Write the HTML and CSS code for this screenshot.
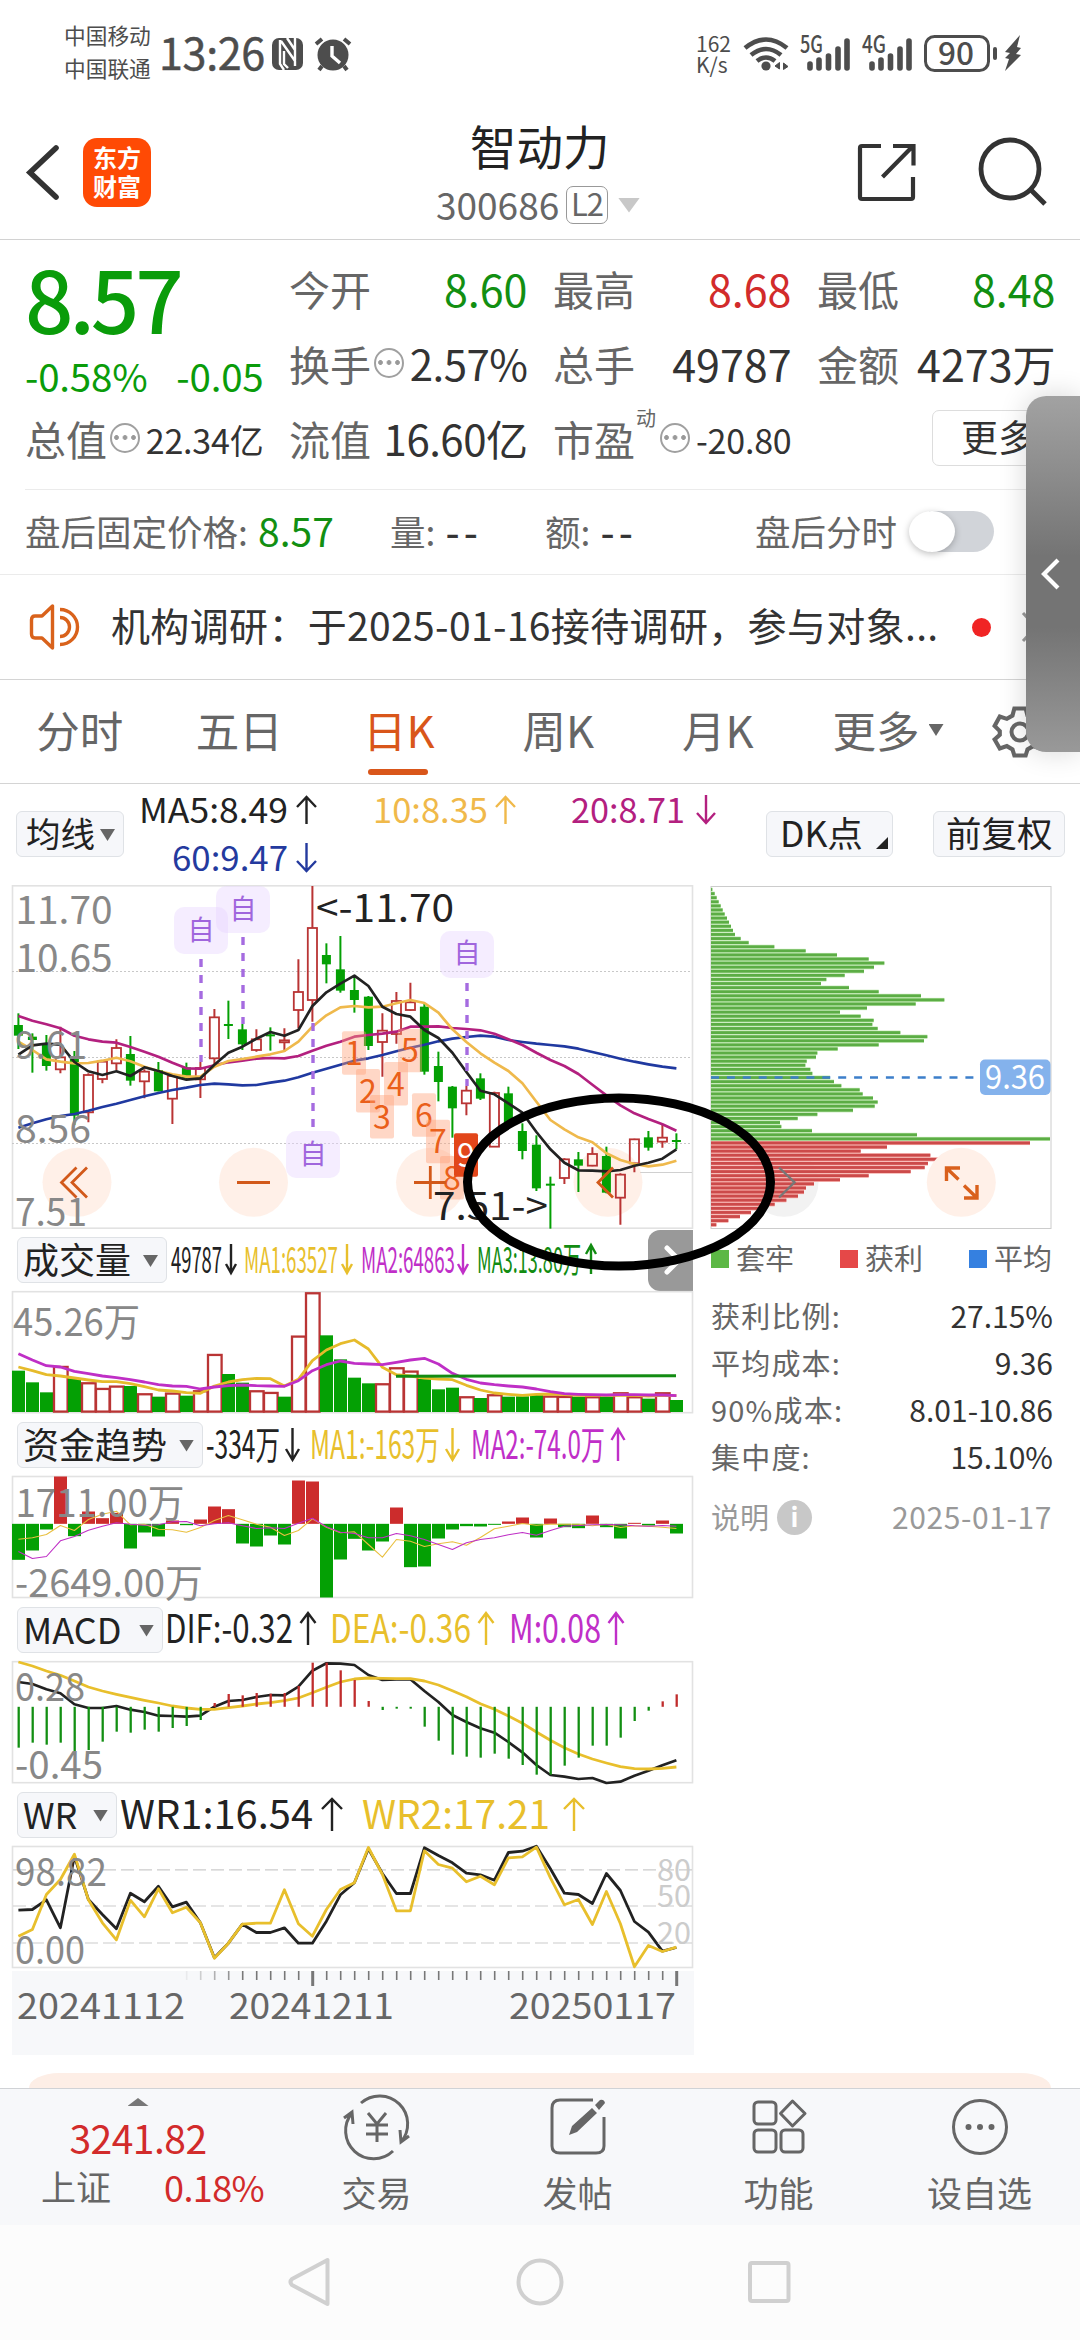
FILE: index.html
```html
<!DOCTYPE html>
<html lang="zh-CN">
<head>
<meta charset="utf-8">
<title>智动力 300686</title>
<link rel="stylesheet" href="styles.css">
</head>
<body>
<div class="screen">
  <header class="status">
    <div class="carriers"><span>中国移动</span><span>中国联通</span></div>
    <span class="clock">13:26</span>
    <svg class="status-left" width="84" height="40" viewBox="270 34 84 40">
      <rect x="273" y="38" width="31" height="32" rx="7" fill="#4d4d4d"/>
      <path d="M281 40V64l4 6M282 41l14 20V66M285 51v13l4 4M296 38v22M288 38l8 12" fill="none" stroke="#fff" stroke-width="2.4"/>
      <circle cx="334" cy="55" r="15.5" fill="#4d4d4d"/>
      <path d="M317 44l6-5M351 44l-6-5M323 66l-3 4M345 66l3 4" stroke="#4d4d4d" stroke-width="4" fill="none"/>
      <path d="M333 46v10l8 7" stroke="#fff" stroke-width="3.4" fill="none"/>
    </svg>
    <div class="speed"><span>162</span><span>K/s</span></div>
    <svg class="status-right" width="290" height="44" viewBox="740 32 290 44">
      <g fill="none" stroke="#4d4d4d" stroke-width="4.6">
        <path d="M745 48Q766 31 787 48M751 55Q766 43 781 55M757 61Q766 54 775 61"/>
      </g>
      <circle cx="766" cy="66" r="4.6" fill="#4d4d4d"/>
      <path d="M779.500 62.500v6.500l-4.500-3zM783.500 63v6.500l4.500-3z" fill="#4d4d4d" stroke="#4d4d4d" stroke-width="1"/>
      <g fill="none" stroke="#4d4d4d" stroke-width="5.6" stroke-linecap="round">
        <path d="M810 64v4M819 60v8M828.500 56v12M838 49v19M847 41v27"/>
        <path d="M872 64v4M881 60v8M890.500 56v12M900 49v19M909 41v27"/>
      </g>
      <g class="net" fill="#4d4d4d"><text x="800" y="53" textLength="23" lengthAdjust="spacingAndGlyphs">5G</text><text x="862" y="53" textLength="24" lengthAdjust="spacingAndGlyphs">4G</text></g>
      <rect x="925.500" y="36.500" width="63" height="34" rx="9" fill="none" stroke="#4d4d4d" stroke-width="3"/>
      <path d="M995 49v9" stroke="#4d4d4d" stroke-width="4" stroke-linecap="round"/>
      <text class="batt" x="938" y="64.500" textLength="36" lengthAdjust="spacingAndGlyphs" fill="#4d4d4d">90</text>
      <path d="M1020 35l-15 17l5 1l-5 5l4 1l-4 12l16-16l-5-1l5-6l-4-1z" fill="#4d4d4d"/>
    </svg>
  </header>

  <div class="titlebar">
    <svg class="back" width="40" height="60" viewBox="24 142 40 60"><path d="M56 148L30 172.500L56 197" fill="none" stroke="#333" stroke-width="5.600" stroke-linecap="round"/></svg>
    <div class="logo"><span>东方</span><span>财富</span></div>
    <div class="title">
      <h1>智动力</h1>
      <div class="code"><span>300686</span><span class="lv">L2</span><i class="tri"></i></div>
    </div>
    <svg class="share" width="62" height="62" viewBox="855 142 62 62"><path d="M881 146H862q-2 0-2 2v49q0 2 2 2h49q2 0 2-2V177M893 146h20.500v19.500M912 147L882.500 177" fill="none" stroke="#333" stroke-width="4.200"/></svg>
    <svg class="search" width="74" height="74" viewBox="974 134 74 74"><circle cx="1009" cy="169" r="29" fill="none" stroke="#333" stroke-width="4.800"/><path d="M1029 189L1044 204" stroke="#333" stroke-width="5"/></svg>
  </div>

  <section class="quote">
    <div class="price">
      <strong>8.57</strong>
      <div class="chg"><span>-0.58%</span><span>-0.05</span></div>
    </div>
    <div class="kv"><span>今开</span><b class="dn">8.60</b></div>
    <div class="kv"><span>最高</span><b class="up">8.68</b></div>
    <div class="kv"><span>最低</span><b class="dn">8.48</b></div>
    <div class="kv"><span>换手</span><i class="dots"></i><b class="tight">2.57%</b></div>
    <div class="kv"><span>总手</span><b>49787</b></div>
    <div class="kv"><span>金额</span><b>4273万</b></div>
    <div class="kv"><span>总值</span><i class="dots"></i><b class="sm">22.34亿</b></div>
    <div class="kv"><span>流值</span><b class="tight">16.60亿</b></div>
    <div class="kv"><span>市盈</span><sup>动</sup><i class="dots"></i><b class="sm">-20.80</b></div>
    <div class="kv"><button class="more">更多</button></div>
  </section>

  <section class="after">
    <span class="a1">盘后固定价格:</span><b class="a2">8.57</b><span class="a3">量:</span><b class="a4">--</b><span class="a5">额:</span><b class="a6">--</b><span class="a7">盘后分时</span><span class="toggle"><i></i></span>
    <svg width="30" height="20" viewBox="0 0 30 20"><path d="M2 3l11 11L24 3" fill="none" stroke="#999" stroke-width="3"/></svg>
  </section>

  <section class="news">
    <svg width="56" height="48" viewBox="27 603 56 48"><path d="M52.500 606v42L42 638H35q-3.500 0-3.500-4V620q0-4 3.500-4h7zM60 609.500a17.500 17.500 0 0 1 0 35M60 617.500a9.500 9.500 0 0 1 0 19" fill="none" stroke="#d9621b" stroke-width="3.400" stroke-linejoin="round"/></svg>
    <p>机构调研：于2025-01-16接待调研，参与对象...</p>
    <i class="dot"></i>
    <svg class="chev" width="20" height="34" viewBox="0 0 20 34"><path d="M2 3l13 14L2 31" fill="none" stroke="#999" stroke-width="3"/></svg>
  </section>

  <nav class="tabs">
    <span>分时</span><span>五日</span><span class="on">日K</span><span>周K</span><span>月K</span><span class="drop">更多<i class="tri"></i></span>
    <svg width="60" height="60" viewBox="-30 -30 60 60"><path d="M-6-25H6L8-17.500L14-14L21.500-16.500L27-6.500L21.500-1V3L27 8L21.500 17.500L14 15L8 18.500L6 25H-6L-8 18.500L-14 15L-21.500 17.500L-27 8L-21.500 3V-1L-27-6.500L-21.500-16.500L-14-14L-8-17.500Z" transform="scale(.94)" fill="none" stroke="#666" stroke-width="4.400"/><circle r="8.500" fill="none" stroke="#666" stroke-width="4"/></svg>
  </nav>

  <div class="malegend">
    <span class="chip">均线<i class="tri"></i></span>
    <svg width="600" height="101" viewBox="130 784 600 101" class="leg s35">
      <text x="139" y="823" textLength="149">MA5:8.49</text><text x="373" y="823" textLength="115" fill="#f0b94a">10:8.35</text><text x="571" y="823" textLength="114" fill="#b3207f">20:8.71</text><text x="172" y="871" textLength="116" fill="#243a9e">60:9.47</text>
      <g class="arr"><path d="M306.500 824V797M297 807l9.500-10l9.500 10"/><path stroke="#f0b94a" d="M505.500 824V797M496 807l9.500-10l9.500 10"/><path stroke="#b3207f" d="M706 795V823M697 813l9 10l9-10"/><path stroke="#243a9e" d="M306.500 843V871M297 861l9.500 10l9.500-10"/></g>
    </svg>
    <span class="chip dk">DK点<i class="corner"></i></span>
    <span class="chip fq">前复权</span>
  </div>

  <main class="board">
    <div class="charts">
      <svg class="kline" width="684" height="346" viewBox="10 884 684 346">
        <rect x="12.500" y="885.800" width="680" height="342.400" fill="none" stroke="#e2e2e2" stroke-width="1.600"/>
        <path d="M12 971.500H692M12 1057.500H692M12 1143.500H692" stroke="#c8c8c8" stroke-dasharray="2 2"/>
        <path d="M640 1172.500H692" stroke="#d0d0d0"/>
        <g fill="rgba(255,214,190,.36)"><circle cx="77" cy="1182.300" r="34.500"/><circle cx="253.500" cy="1182.300" r="34.500"/><circle cx="430.500" cy="1182.300" r="34.500"/><circle cx="608" cy="1182.300" r="34.500"/></g>
        <g id="candles"></g>
        <g fill="rgba(232,212,255,.42)"><rect x="174" y="907" width="54" height="47" rx="10"/><rect x="216" y="886" width="54" height="47" rx="10"/><rect x="286" y="1131" width="54" height="47" rx="10"/><rect x="440" y="931" width="54" height="47" rx="10"/></g>
        <g class="zi"><text x="201" y="940">自</text><text x="243" y="919">自</text><text x="313" y="1164">自</text><text x="467" y="963">自</text></g>
        <g id="kma"></g>
        <path d="M201 959V1062M243 937V1024M313 1023V1127M467 983V1086" stroke="#a56be0" stroke-width="3.400" stroke-dasharray="8 8"/>
        <g id="marks"></g>
        <g fill="none" stroke="#d2591a" stroke-width="2.800"><path d="M76.500 1167.500L61.500 1182.500L76.500 1197.500M87 1167.500L72 1182.500L87 1197.500M237 1182.500H270M414 1182.500H446M430.300 1166V1199M613 1167.500L598 1182.500L613 1197.500"/></g>
        <g class="ax"><text x="15.500" y="924" textLength="97">11.70</text><text x="15.500" y="972" textLength="97">10.65</text><text x="15" y="1058.500" textLength="72">9.61</text><text x="15" y="1143" textLength="76">8.56</text><text x="15" y="1225.500" textLength="72">7.51</text></g>
        <g class="ext"><text x="316" y="922" textLength="138">&lt;-11.70</text><text x="433" y="1220" textLength="115">7.51-&gt;</text></g>
      </svg>

      <div class="ind"><span class="chip">成交量<i class="tri"></i></span>
        <svg class="leg s36" width="440" height="60" viewBox="170 1230 440 60"><text x="171" y="1272.700" textLength="51">49787</text><text x="244" y="1272.700" textLength="94" fill="#e8bf2c">MA1:63527</text><text x="361" y="1272.700" textLength="94" fill="#c02fc8">MA2:64863</text><text x="477" y="1272.700" textLength="104" fill="#128c12">MA3:13.80万</text>
        <g class="arr n"><path d="M231 1244v29m-5-9l5 9l5-9"/><path stroke="#e8bf2c" d="M347 1244v29m-5-9l5 9l5-9"/><path stroke="#c02fc8" d="M463 1244v29m-5-9l5 9l5-9"/><path stroke="#128c12" d="M591 1274v-29m-5 9l5-9l5 9"/></g></svg>
        <span class="nextbtn"><svg width="20" height="32" viewBox="0 0 20 32"><path d="M4 4L16 16L4 28" fill="none" stroke="#fff" stroke-width="5" stroke-linecap="round"/></svg></span>
      </div>
      <svg class="sub" width="684" height="124" viewBox="10 1290 684 124"><rect class="frame" x="12.500" y="1291.700" width="680" height="121"/><g id="vol"></g><g class="ax"><text x="13" y="1335.500" textLength="127">45.26万</text></g></svg>

      <div class="ind h61"><span class="chip">资金趋势<i class="tri"></i></span>
        <svg class="leg s39" width="440" height="60" viewBox="204 1414 440 60"><text x="206" y="1458" textLength="74">-334万</text><text x="310" y="1458" textLength="130" fill="#e8bf2c">MA1:-163万</text><text x="471" y="1458" textLength="134" fill="#c02fc8">MA2:-74.0万</text>
        <g class="arr"><path d="M292.500 1427v32m-6.500-11l6.500 11l6.500-11"/><path stroke="#e8bf2c" d="M452.500 1427v32m-6.500-11l6.500 11l6.500-11"/><path stroke="#c02fc8" d="M618 1460v-32m-6.500 11l6.500-11l6.500 11"/></g></svg>
      </div>
      <svg class="sub" width="684" height="124" viewBox="10 1475.500 684 124"><rect class="frame" x="12.500" y="1477" width="680" height="121"/><g id="fund"></g><g class="ax"><text x="15.500" y="1517" textLength="169">1711.00万</text><text x="15" y="1597" textLength="188">-2649.00万</text></g></svg>

      <div class="ind h61"><span class="chip">MACD<i class="tri"></i></span>
        <svg class="leg s39" width="470" height="60" viewBox="163 1600 470 60"><text x="164" y="1643" textLength="128">DIF:-0.32</text><text x="329" y="1643" textLength="141" fill="#e8bf2c">DEA:-0.36</text><text x="508" y="1643" textLength="92" fill="#c02fc8">M:0.08</text>
        <g class="arr"><path d="M307 1645v-32m-7.500 10l7.500-10l7.500 10"/><path stroke="#e8bf2c" d="M485 1645v-32m-7.500 10l7.500-10l7.500 10"/><path stroke="#c02fc8" d="M615 1645v-32m-7.500 10l7.500-10l7.500 10"/></g></svg>
      </div>
      <svg class="sub" width="684" height="124" viewBox="10 1660 684 124"><rect class="frame" x="12.500" y="1661.700" width="680" height="121"/><g id="macd"></g><g class="ax"><text x="15" y="1701" textLength="70">0.28</text><text x="15" y="1779" textLength="88">-0.45</text></g></svg>

      <div class="ind h61"><span class="chip">WR<i class="tri"></i></span>
        <svg class="leg s39" width="480" height="60" viewBox="118 1784 480 60"><text x="120" y="1828" textLength="193">WR1:16.54</text><text x="362" y="1828" textLength="188" fill="#e8bf2c">WR2:17.21</text>
        <g class="arr"><path d="M332 1830v-32m-10 10l10-10l10 10"/><path stroke="#e8bf2c" d="M574 1830v-32m-10 10l10-10l10 10"/></g></svg>
      </div>
      <svg class="sub" width="684" height="126" viewBox="10 1845.500 684 126"><rect class="frame" x="12.500" y="1847" width="680" height="121"/><path d="M13 1870.300H692M13 1906.500H692M13 1943.500H692" stroke="#ccc" stroke-width="1.200" stroke-dasharray="13 5"/><g id="wr"></g><g class="ax"><text x="15" y="1886.500" textLength="92">98.82</text><text x="15" y="1964.500" textLength="70">0.00</text></g><g class="lv3"><text x="657" y="1881" textLength="34">80</text><text x="657" y="1907" textLength="34">50</text><text x="657" y="1944" textLength="34">20</text></g></svg>

      <div class="axis"><svg width="680" height="84" viewBox="12 1971 680 84"><g id="ticks"></g><g class="dates"><text x="17" y="2018.500" textLength="168">20241112</text><text x="229" y="2018.500" textLength="165">20241211</text><text x="509" y="2018.500" textLength="167">20250117</text></g></svg></div>
    </div>

    <aside class="chipsdist">
      <svg width="344" height="346" viewBox="709 884 344 346">
        <rect x="711" y="886.500" width="340" height="342" fill="#fff" stroke="#ccc"/>
        <circle cx="784" cy="1182.300" r="34.500" fill="#f2f2f2"/>
        <g id="dist"></g>
        <circle cx="961.300" cy="1182.300" r="34.500" fill="#fff0e8"/>
        <path d="M711 1077.500H976" stroke="#3d7fca" stroke-width="2.600" stroke-dasharray="8 7.900"/>
        <rect x="980" y="1059.500" width="70.500" height="35.500" rx="5" fill="#84b2ec"/>
        <text class="avg" x="985" y="1089" textLength="60" lengthAdjust="spacingAndGlyphs">9.36</text>
        <path d="M779 1167.500L794.500 1182.300L779 1197.500" fill="none" stroke="#777" stroke-width="2.400"/>
        <path d="M946.500 1181V1168H960M947 1168.500L958.500 1179.500M964 1198H977V1185M964 1185.500L976 1197" fill="none" stroke="#d9601c" stroke-width="3.400"/>
      </svg>
      <div class="key"><span><i class="g"></i>套牢</span><span><i class="r"></i>获利</span><span><i class="b"></i>平均</span></div>
      <dl>
        <div><dt>获利比例:</dt><dd>27.15%</dd></div>
        <div><dt>平均成本:</dt><dd>9.36</dd></div>
        <div><dt>90%成本:</dt><dd>8.01-10.86</dd></div>
        <div><dt>集中度:</dt><dd>15.10%</dd></div>
      </dl>
      <div class="note"><span>说明</span><i>i</i><time>2025-01-17</time></div>
    </aside>
  </main>

  <div class="promo"></div>

  <footer class="bottom">
    <div class="index"><i class="upt"></i><b>3241.82</b><div><span>上证</span><em>0.18%</em></div></div>
    <div class="act"><svg width="68" height="62" viewBox="-34 -31 68 62"><path d="M-16-24A28 28 0 0 1 24 15M16 24A28 28 0 0 1-25-14M-33-9L-25-15L-24-3M32 9L24 15L23 3M-9-14L0-3L9-14M-11-2H11M-11 7H11M0-3V15" fill="none" stroke="#666" stroke-width="3"/></svg><span>交易</span></div>
    <div class="act"><svg width="68" height="62" viewBox="-34 -31 68 62"><path d="M15-27H-18Q-26-27-26-19V19Q-26 26-18 26H18Q26 26 26 19V-10" fill="none" stroke="#666" stroke-width="3"/><path d="M-9 8L-6-1L14-19L19-14L-1 5ZM17-22L22-27Q26-28 27-24L21-17Z" fill="#666"/></svg><span>发帖</span></div>
    <div class="act"><svg width="68" height="62" viewBox="-34 -31 68 62"><g fill="none" stroke="#666" stroke-width="3"><rect x="-25" y="-25" width="22" height="22" rx="4"/><rect x="-25" y="3" width="22" height="22" rx="4"/><rect x="2" y="3" width="22" height="22" rx="4"/><path d="M13.500-26L26-13.500L13.500-1L1.500-13.500Z" stroke-linejoin="round"/></g></svg><span>功能</span></div>
    <div class="act"><svg width="68" height="62" viewBox="-34 -31 68 62"><circle r="26.500" fill="none" stroke="#666" stroke-width="3"/><circle cx="-11.500" r="3" fill="#666"/><circle r="3" fill="#666"/><circle cx="11.500" r="3" fill="#666"/></svg><span>设自选</span></div>
  </footer>
  <div class="sysnav">
    <svg width="520" height="60" viewBox="280 2252 520 60" fill="none" stroke="#d0d0d0" stroke-width="4"><path d="M327.500 2260V2304L292 2285Q289 2282 292 2279Z" stroke-linejoin="round"/><circle cx="540" cy="2282" r="21.500"/><rect x="750" y="2263" width="38.500" height="38" rx="2"/></svg>
  </div>

  <div class="handle"><svg width="24" height="36" viewBox="0 0 24 36"><path d="M19 4L5 18L19 32" fill="none" stroke="#fff" stroke-width="4.200"/></svg></div>
  <svg class="circle-note" width="320" height="184" viewBox="0 0 320 184"><ellipse cx="160" cy="92" rx="151.500" ry="84" fill="none" stroke="#000" stroke-width="9"/></svg>
</div>
<script src="charts.js"></script>
</body>
</html>
```
FILE: styles.css
```css
* { box-sizing: border-box; margin: 0; padding: 0; }
body { width: 1080px; background: #fff; font-family: "Noto Sans CJK SC", "Noto Sans", sans-serif; color: #333; font-size: 36px; }
i, em { font-style: normal; }
b { font-weight: 400; }
svg { display: block; flex: none; overflow: visible; }
svg text { font-family: "Noto Sans CJK SC", sans-serif; }
.screen { position: relative; width: 1080px; height: 2340px; overflow: hidden; display: flex; flex-direction: column; }
.screen > * { flex: none; }

.status { height: 110px; display: flex; align-items: flex-start; padding-left: 64px; color: #4d4d4d; }
.carriers { width: 90px; margin-top: 18px; display: flex; flex-direction: column; font-size: 21.700px; line-height: 33px; }
.clock { width: 110px; margin: 23px 0 0 5px; font-size: 43px; line-height: 56px; white-space: nowrap; letter-spacing: -.3px; -webkit-text-stroke: .5px #4d4d4d; }
.status-left { margin-top: 34px; }
.speed { margin: 33px 0 0 343px; width: 42px; display: flex; flex-direction: column; font-size: 21px; line-height: 21px; }
.status-right { margin: 32px 0 0 2px; }
.net text { font-size: 24px; font-weight: 500; }
.batt { font-size: 31px; font-weight: 500; }

.titlebar { height: 130px; border-bottom: 1px solid #d2d2d2; display: flex; align-items: flex-start; padding-left: 24px; }
.back { margin-top: 32px; }
.logo { margin: 28px 0 0 19px; width: 68px; height: 69px; border-radius: 14px; background: #ff4a05; color: #fff; font-weight: 700; font-size: 24px; line-height: 29px; display: flex; flex-direction: column; align-items: center; padding-top: 4px; }
.title { width: 704px; padding-top: 3px; display: flex; flex-direction: column; align-items: center; }
.title h1 { width: 704px; padding-left: 319px; font-weight: 400; font-size: 46.500px; line-height: 64px; color: #222; }
.code { width: 704px; padding-left: 285px; display: flex; align-items: center; height: 56px; font-size: 37px; color: #666; margin-top: 1px; }
.code span:first-child { width: 130px; line-height: 50px; margin-top: -4px; }
.lv { width: 42px; height: 38px; border: 1.500px solid #999; border-radius: 7px; font-size: 31px; line-height: 32px; text-align: center; letter-spacing: -1px; margin-top: -2px; }
.tri { display: inline-block; width: 15px; height: 12px; background: #666; clip-path: polygon(0 0, 100% 0, 50% 100%); }
.code .tri { width: 22px; height: 15px; margin: -2px 0 0 10px; background: #c8c8c8; }
.share { margin-top: 32px; }
.search { margin: 24px 0 0 58px; }

.quote { height: 249px; padding: 13px 24px 0 25px; display: grid; grid-template-columns: repeat(4, 238.500px); grid-template-rows: repeat(3, 75px); column-gap: 25.500px; }
.price { grid-row: span 2; color: #0a9c0a; }
.price strong { display: block; font-size: 85px; font-weight: 500; line-height: 88px; letter-spacing: -4px; margin-top: 0; }
.price .chg { display: flex; justify-content: space-between; font-size: 38.500px; line-height: 50px; letter-spacing: -.2px; margin-top: 9px; }
.kv { display: flex; align-items: center; font-size: 41px; line-height: 60px; padding-bottom: 6px; color: #666; white-space: nowrap; }
.kv b { margin-left: auto; color: #333; font-size: 43px; }
.kv b.tight { font-size: 42px; letter-spacing: -.5px; }
.kv b.sm { font-size: 34px; letter-spacing: -.2px; padding-top: 4px; }
.kv b.dn { color: #128f12; }
.kv b.up { color: #d22b2b; }
.kv sup { font-size: 20px; line-height: 20px; align-self: flex-start; margin: 5px 2px 0 1px; }
.dots { width: 30px; height: 30px; border: 2.400px solid #a0a0a0; border-radius: 50%; margin-left: 3px; background: radial-gradient(circle, #999 0 2px, transparent 2.500px) center / 8.500px 8.500px repeat-x; background-clip: content-box; padding: 0 1px; }
.kv sup + .dots { margin-left: 2px; }
.more { margin-left: 115px; width: 130px; height: 56px; flex: none; border: 1.500px solid #ddd; border-radius: 7px; background: #fff; color: #333; font: 37px/50px "Noto Sans CJK SC", sans-serif; padding-bottom: 4px; text-align: left; padding-left: 28px; }

.after { height: 85px; margin-left: 25px; border-top: 1px solid #ebebeb; display: flex; align-items: center; color: #666; font-size: 35.500px; white-space: nowrap; padding-bottom: 4px; }
.after b { color: #333; font-size: 38px; }
.a1 { width: 233px; }
.after .a2 { width: 132px; color: #128f12; font-size: 39px; }
.a3 { width: 56px; } .after .a4, .after .a6 { letter-spacing: 5px; -webkit-text-stroke: .6px #333; } .after .a4 { width: 99px; } .a5 { width: 56px; } .a6 { width: 154px; } .a7 { width: 154px; }
.toggle { width: 85px; height: 41px; display: flex; border-radius: 21px; background: linear-gradient(90deg, transparent 20px, #d1d4d9 20px); margin-top: 2px; }
.toggle i { width: 46px; height: 41px; border-radius: 50%; background: #fff; box-shadow: 0 2px 7px rgba(0,0,0,.25); }
.after svg { margin: -6px 0 0 31px; }

.news { height: 105px; border-top: 1px solid #ebebeb; display: flex; align-items: center; padding-left: 27px; }
.news p { margin-left: 28px; width: 861px; font-size: 39px; letter-spacing: .35px; line-height: 60px; white-space: nowrap; margin-top: -6px; }
.dot { width: 19px; height: 19px; border-radius: 50%; background: #f02424; }
.chev { margin-left: 30px; }

.tabs { height: 105px; border-top: 1px solid #d4d4d4; border-bottom: 1px solid #d4d4d4; display: flex; font-size: 43.500px; color: #666; }
.tabs span { width: 159.500px; height: 100%; display: flex; justify-content: center; align-items: center; padding-bottom: 4px; position: relative; }
.tabs .drop { width: 191px; justify-content: flex-start; padding-left: 35px; }
.tabs .tri { margin: 1px 0 0 9px; }
.tabs .on { color: #d9561a; }
.tabs .on::after { content: ""; position: absolute; left: 49px; bottom: 8px; width: 60px; height: 6px; border-radius: 3px; background: #d9561a; }
.tabs svg { margin: 22px 0 0 1px; }

.malegend { height: 100px; display: flex; align-items: center; padding-left: 16px; }
.chip { height: 46px; flex: none; display: flex; align-items: center; border: 1.500px solid #dfe2e6; border-radius: 6px; background: #f6f7fa; color: #222; font-size: 36px; line-height: 40px; white-space: nowrap; padding: 0 8px 4px 5px; }
.chip .tri { margin: 6px 0 0 auto; }
.malegend .chip { width: 108px; font-size: 34.500px; padding-left: 9px; }
.malegend .leg { margin-left: 6px; }
.malegend .chip.dk { width: 127px; margin-left: 36px; padding-left: 13px; font-size: 35.500px; }
.corner { width: 12px; height: 12px; margin: 22px -4px 0 auto; background: #222; clip-path: polygon(100% 0, 100% 100%, 0 100%); }
.malegend .chip.fq { width: 132px; margin-left: 40px; padding-left: 12px; font-size: 35.500px; }
.leg text { fill: #222; }
.leg text[fill="#f0b94a"] { fill: #f0b94a; }
.leg text[fill="#b3207f"] { fill: #b3207f; }
.leg text[fill="#243a9e"] { fill: #243a9e; }
.leg text[fill="#e8bf2c"] { fill: #e8bf2c; }
.leg text[fill="#c02fc8"] { fill: #c02fc8; }
.leg text[fill="#128c12"] { fill: #128c12; }
.s35 text { font-size: 34.500px; }
.s36 text { font-size: 36px; }
.s39 text { font-size: 39px; }
.arr { fill: none; stroke-width: 2.400; stroke: #222; }

.board { display: flex; height: 1171px; }
.charts { width: 700px; padding-left: 10px; display: flex; flex-direction: column; }
.ind { height: 60px; display: flex; align-items: center; padding-left: 7px; }
.ind .chip { width: 150px; }
.ind .leg { margin-left: 3px; }
.ind.h61 { height: 61.500px; }
.ind:nth-of-type(2) .chip { width: 186px; }
.ind:nth-of-type(3) .chip { width: 146px; }
.ind:nth-of-type(4) .chip { width: 100px; }
.ind:nth-of-type(n+2) .leg { margin-left: 1px; }
.nextbtn { width: 45px; height: 61px; margin-left: 38px; border-radius: 12px 0 0 12px; background: #999; display: flex; align-items: center; padding-left: 15px; }
.frame { fill: none; stroke: #e2e2e2; stroke-width: 1.600; }
.ax text { font-size: 38.500px; fill: #888; }
.ext text { font-size: 38px; fill: #222; }
.zi text { font-size: 27px; fill: #a066dd; text-anchor: middle; }
.marks text { font-size: 32px; fill: #ea5f1a; text-anchor: middle; }
.lv3 text { font-size: 30px; fill: #ccc; }
.dates text { font-size: 36px; fill: #666; }
.axis { margin-left: 2px; width: 682px; height: 84px; background: #f7f8fa; }
.avg { font-size: 32px; fill: #fff; }

.chipsdist { width: 354px; padding-left: 9px; }
.key { display: flex; justify-content: space-between; padding: 0 2px; height: 57px; align-items: center; font-size: 29px; color: #666; }
.key span { display: flex; align-items: center; line-height: 40px; margin-top: -3px; }
.key i { width: 18px; height: 18px; margin: 4px 7px 0 0; }
.key .g { background: #5cb845; } .key .r { background: #e54848; } .key .b { background: #3580e0; }
dl { padding: 5px 1px 0 2px; }
dl div { display: flex; justify-content: space-between; align-items: center; height: 47px; white-space: nowrap; padding-bottom: 1px; }
dt { font-size: 29px; letter-spacing: 1.200px; color: #666; } dd { font-size: 30px; color: #333; }
.note { height: 72px; display: flex; align-items: center; padding: 0 2px; font-size: 29px; color: #999; }
.note i { width: 35px; height: 35px; border-radius: 50%; background: #c8c8c8; color: #fff; font-weight: 700; font-size: 26px; line-height: 31px; text-align: center; margin: 3px 0 0 8px; }
.note time { margin-left: auto; font-size: 30px; letter-spacing: .6px; }

.promo { margin: 18px 29px 0; height: 15px; border-radius: 30px 30px 0 0 / 15px 15px 0 0; background: #fdeee6; }
.bottom { height: 137px; border-top: 1.500px solid #d0d2d6; background: #f7f8fa; display: flex; color: #666; font-size: 35px; line-height: 44px; }
.index { width: 276px; display: flex; flex-direction: column; align-items: center; color: #d22b2b; }
.upt { width: 21px; height: 8px; margin-top: 9px; background: #777; clip-path: polygon(50% 0, 100% 100%, 0 100%); }
.index b { font-size: 39px; line-height: 50px; margin-top: 6px; letter-spacing: -.5px; }
.index div { display: flex; width: 276px; padding-left: 41px; margin-top: 2px; }
.index div span { color: #666; width: 123px; }
.index em { font-size: 36px; letter-spacing: -.6px; }
.act { width: 201px; display: flex; flex-direction: column; align-items: center; padding-top: 7px; gap: 12px; }
.sysnav { height: 116px; background: #fcfcfc; display: flex; justify-content: center; align-items: center; }
.sysnav svg { margin-top: -2px; }

.handle { position: absolute; left: 1026px; top: 396px; width: 54px; height: 356px; border-radius: 20px 0 0 20px; background: linear-gradient(#a2a2a2, #8c8c8c 22%, #747474 45%, #747474 65%, #999 100%); box-shadow: 0 0 28px rgba(0,0,0,.16); display: flex; align-items: center; padding-left: 13px; }
.circle-note { position: absolute; left: 459px; top: 1089.500px; }
```
FILE: charts.js
```js
const GREEN = '#04a004', RED = '#b93434';
const X = i => 18.4 + 14 * i;
const put = (id, html) => { document.getElementById(id).innerHTML = html; };
const line = (vals, base, color, w = 2.7) =>
  `<polyline fill="none" stroke="${color}" stroke-width="${w}" stroke-linejoin="round" points="${vals.map((v, i) => X(i).toFixed(1) + ',' + (base + v / 3).toFixed(1)).join(' ')}"/>`;

// direction, high, body top, body bottom, low
const candles = `g430,465,497,537 g490,500,510,608 g495,525,588,602 r470,562,598,610 g543,565,737,765 r610,615,727,757 r570,575,627,640 r508,534,580,600 g498,552,632,647 r598,605,634,685 g576,600,664,664 r612,618,686,762 g578,592,625,628 r576,594,628,684 r417,442,565,585 g392,462,468,507 g462,478,523,540 r478,508,540,545 g472,493,499,542 r475,511,517,545 r268,366,420,475 r48,174,390,455 g220,255,283,340 g198,298,362,368 g318,360,390,428 g378,380,528,540 r430,482,516,620 r366,393,492,521 r338,397,420,422 g402,410,605,614 g545,588,636,694 g648,650,715,803 r648,662,700,736 g610,625,686,690 r665,669,830,830 g650,670,760,770 g760,783,843,868 g796,824,955,963 g920,941,947,1076 r865,868,924,942 g846,868,887,966 r832,852,887,889 g830,858,968,970 r910,914,983,1064 r806,808,880,907 g783,802,833,842 r762,803,815,833 g790,810,816,838`.split(' ');
put('candles', candles.map((s, i) => {
  const [h, t, b, l] = s.slice(1).split(',').map(v => 870 + v / 3), x = X(i);
  if (s[0] === 'g') return `<path d="M${x} ${h}V${l}" stroke="${GREEN}" stroke-width="2"/><rect x="${x - 4.5}" y="${t}" width="9" height="${b - t}" fill="${GREEN}"/>`;
  return `<path d="M${x} ${h}V${t}M${x} ${b}V${l}" stroke="${RED}" stroke-width="2"/><rect x="${x - 4.6}" y="${t}" width="9.2" height="${b - t}" fill="none" stroke="${RED}" stroke-width="1.8"/>`;
}).join(''));

const ma5 = [554,526,521,524,576,604,615,604,618,592,603,618,629,625,584,548,530,506,486,497,480,408,367,341,317,348,410,432,440,480,504,548,606,662,673,700,728,786,838,878,901,902,904,900,887,878,866,838];
const ma10 = [515,540,568,575,580,579,572,563,574,590,603,613,620,620,590,573,567,560,553,543,515,470,436,412,408,412,410,400,390,399,428,478,516,550,578,603,640,695,750,778,802,817,850,870,882,889,884,872];
const ma20 = [438,452,463,475,497,508,515,518,531,545,560,578,595,596,586,577,572,566,564,565,558,542,527,515,500,495,491,485,470,470,469,474,477,481,491,508,525,548,570,588,612,644,676,706,730,747,763,782];
const ma60 = [773,760,748,738,732,722,711,701,690,679,669,660,653,645,641,643,646,645,638,632,622,608,596,584,572,565,555,544,533,524,514,506,501,497,500,510,516,521,525,529,536,546,556,566,575,583,590,595];
put('kma', line(ma60, 870, '#2039a0') + line(ma20, 870, '#b3207f') + line(ma10, 870, '#efb94c') + line(ma5, 870, '#222'));

// nine-turn markers
const marks = [484, 597, 675, 576, 476, 670, 749, 858, 790];
document.getElementById('marks').setAttribute('class', 'marks');
put('marks', marks.map((v, i) => {
  const x = 354 + 14 * i, y = 870 + v / 3, last = i === 8;
  return `<rect x="${x - 12}" y="${y}" width="24" height="43.5" rx="2" fill="${last ? '#e2461a' : 'rgba(255,160,120,.42)'}"/><text x="${x}" y="${y + 33.5}" ${last ? 'style="fill:#fff"' : ''}>${i + 1}</text>`;
}).join(''));

const vol = 'g422 g457 g487 r409 g445 r458 r475 r468 g468 r491 g500 r489 g497 r482 r373 g432 g458 r482 r487 g500 r318 r188 g316 g388 g443 g460 r461 r413 r423 g447 g478 g473 r500 g504 r494 g500 g499 g492 r498 r499 g500 r500 g500 r488 r500 g506 r488 g510'.split(' ');
const v1 = [411,422,434,438,444,450,455,455,461,470,480,483,488,490,468,456,449,445,446,468,448,392,360,341,330,357,412,434,438,444,447,449,466,480,489,493,496,493,492,494,496,496,496,495,496,498,496,497];
const v2 = [371,390,407,411,424,431,438,443,449,456,464,468,469,477,471,467,465,467,468,469,452,422,404,393,400,402,404,397,390,385,402,430,448,459,464,468,471,477,485,491,493,494,495,494,494,495,495,497];
put('vol', vol.map((s, i) => {
  const y = 1230 + s.slice(1) / 3, x = 12 + 14 * i;
  return s[0] === 'g' ? `<rect x="${x}" y="${y}" width="13" height="${1412 - y}" fill="${GREEN}"/>`
    : `<rect x="${x}" y="${y + .6}" width="13.6" height="${1411 - y}" fill="#fff" stroke="${RED}" stroke-width="2.3"/>`;
}).join('') + line(v1, 1230, '#e6bb2b', 2.8) + line(v2, 1230, '#bf2fc6', 2.8) + '<path d="M396 1376.3L676 1375.7" stroke="#128c12" stroke-width="3"/>');

const fund = [991,963,900,741,920,846,866,850,957,909,921,873,887,870,831,839,942,951,918,945,753,756,1104,990,928,963,936,834,1013,1011,927,900,890,891,886,876,864,924,867,893,896,858,893,927,880,888,873,912];
const f1 = [929,925,915,888,903,870,854,845,886,884,899,901,908,894,873,858,871,884,893,918,903,868,893,910,907,945,983,930,935,951,943,937,947,924,898,890,882,887,884,884,884,889,884,894,889,890,893,897];
const f2 = [966,987,981,934,921,902,890,880,884,887,886,877,876,889,883,880,889,897,895,897,881,866,892,908,912,925,925,912,919,930,945,960,940,930,925,916,909,917,903,890,888,886,885,886,889,890,888,890];
put('fund', fund.map((v, i) => `<rect x="${12 + 14 * i}" y="${1230 + Math.min(v, 883) / 3}" width="13" height="${Math.abs(v - 883) / 3}" fill="${v > 883 ? GREEN : '#cc2c2c'}"/>`).join('')
  + line(f1, 1230, '#e9c040', 1.1) + line(f2, 1230, '#bf2fc6', 1.1));

const bars = [443,428,434,428,458,450,425,395,398,389,395,384,378,360,309,282,286,279,281,279,258,188,188,211,240,303,330,326,326,380,422,464,470,473,461,476,495,524,524,497,473,437,437,413,363,332,304,283];
const dif = [246,252,268,280,313,324,324,318,329,336,347,348,350,347,320,303,300,291,285,286,260,212,190,191,195,225,240,238,238,273,306,345,366,385,398,426,457,495,525,530,537,534,549,545,527,512,496,481];
const dea = [186,198,213,226,243,261,273,283,292,301,309,318,324,328,328,323,318,312,308,302,294,278,262,246,237,234,235,236,236,243,255,272,290,311,328,348,370,396,421,443,462,477,489,500,506,507,505,501];
put('macd', line(dif, 1600, '#222') + line(dea, 1600, '#e8bf2c', 2.8)
  + bars.map((v, i) => `<path d="M${X(i) + .3} 1706.8V${1600 + v / 3}" stroke="${v > 320 ? '#128f12' : '#c02c2c'}" stroke-width="2.3"/>`).join(''));

const w1 = [932,930,901,985,770,900,945,988,881,907,860,922,908,970,1075,1031,974,999,999,985,1031,1031,965,886,850,748,822,882,882,745,768,790,821,826,842,759,755,740,808,881,885,912,822,873,966,998,1055,1044];
const w2 = [1010,990,885,840,764,901,970,1021,902,952,868,940,923,970,1076,1031,974,971,971,871,973,1010,930,870,850,744,825,934,934,754,795,806,847,830,856,775,772,743,835,916,900,975,876,973,1102,1038,1056,1043];
put('wr', line(w1, 1600, '#222', 2.8) + line(w2, 1600, '#e8bf2c', 2.8));

put('ticks', Array.from({ length: 36 }, (_, k) => {
  const i = k + 12, big = i === 21 || i === 47;
  return `<path d="M${X(i) + .3} 1971V${big ? 1986 : 1980}" stroke="#777" stroke-width="${big ? 3 : 1.6}" opacity="${Math.min(1, .1 + k * .22)}"/>`;
}).join(''));

// share of holders per price level, first 62 levels are above the current price
const dist = [67,74,80,86,92,98,104,111,117,123,129,135,152,176,253,347,441,536,583,552,522,464,409,393,477,566,693,763,677,531,450,512,551,547,563,631,712,702,566,443,382,378,350,346,361,367,420,432,454,509,518,549,563,554,489,382,323,270,274,366,681,1080,1020,591,512,721,763,714,704,662,536,450,372,348,342,324,289,254,220,183,150,115,79];
put('dist', dist.map((v, i) => {
  const y = 889.5 + 4.088 * i - 2, w = (v - 63) / 3, g = i < 62;
  return `<rect x="711" y="${y}" width="${w}" height="4.1" fill="${g ? '#bfe8b0' : '#f5a9a4'}"/><rect x="711" y="${y + .6}" width="${w}" height="2.8" fill="${g ? '#5cad45' : '#cc4a4a'}"/>`;
}).join(''));

document.querySelectorAll('text[textLength]').forEach(t => t.setAttribute('lengthAdjust', 'spacingAndGlyphs'));
```
